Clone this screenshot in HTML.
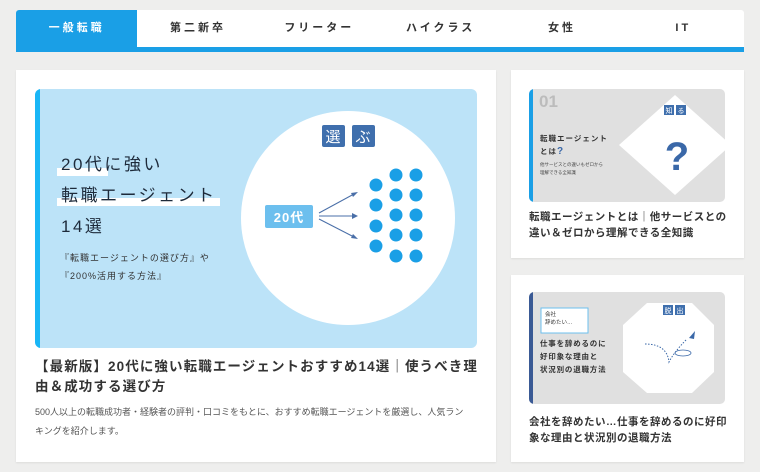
<!DOCTYPE html>
<html><head><meta charset="utf-8"><style>
*{margin:0;padding:0;box-sizing:border-box}
body{width:760px;height:472px;background:#eeeeed;font-family:"Liberation Sans","Noto Sans CJK JP",sans-serif;position:relative;overflow:hidden;color:#333}
.nav{position:absolute;left:16px;top:10px;width:728px;height:42px;background:#fff;border-bottom:5px solid #1a9fe6;display:flex;border-radius:3px 3px 0 0}
.nav div{flex:1;text-align:center;line-height:37px;font-size:11px;font-weight:bold;letter-spacing:3px;color:#333}
.nav .on{background:#1a9fe6;color:#fff;border-radius:3px 0 0 0}
.card{position:absolute;background:#fff;box-shadow:0 1px 2px rgba(0,0,0,.08)}
.abs{position:absolute}
.ttl{font-size:13.5px;font-weight:bold;letter-spacing:1.1px;line-height:20px;color:#333;white-space:nowrap}
.st{font-size:10.5px;font-weight:bold;letter-spacing:.5px;line-height:16px;color:#333;white-space:nowrap}
</style></head><body>
<div class="nav"><div class="on">一般転職</div><div>第二新卒</div><div>フリーター</div><div>ハイクラス</div><div>女性</div><div>IT</div></div>

<div class="card" style="left:16px;top:70px;width:480px;height:392px"></div>
<div class="abs" style="left:35px;top:89px;width:442px;height:259px;background:#bce3f8;border-radius:6px;overflow:hidden">
 <div class="abs" style="left:0;top:0;width:5px;height:259px;background:#19b6f6"></div>
 <div class="abs" style="left:22px;top:79px;width:51px;height:8px;background:#fff"></div>
 <div class="abs" style="left:22px;top:109px;width:163px;height:8px;background:#fff"></div>
 <div class="abs" style="left:26px;top:60px;font-size:17px;letter-spacing:2.5px;line-height:31px;color:#1d2a3a;white-space:nowrap">20代に強い<br>転職エージェント<br>14選</div>
 <div class="abs" style="left:25px;top:160px;font-size:9px;letter-spacing:1px;line-height:18px;color:#333;white-space:nowrap">『転職エージェントの選び方』や<br>『200%活用する方法』</div>
 <svg class="abs" style="left:0;top:0" width="442" height="259">
  <circle cx="313" cy="129" r="107" fill="#fff"/>
  <rect x="287" y="36" width="23" height="22" rx="2" fill="#3f6fad"/>
  <rect x="317" y="36" width="23" height="22" rx="2" fill="#3f6fad"/>
  <text x="298" y="53" font-size="15" fill="#fff" text-anchor="middle" font-family="Noto Sans CJK JP">選</text>
  <text x="328" y="53" font-size="15" fill="#fff" text-anchor="middle" font-family="Noto Sans CJK JP">ぶ</text>
  <rect x="230" y="116" width="48" height="23" rx="2" fill="#6cbfee"/>
  <text x="254" y="133" font-size="13" font-weight="bold" fill="#fff" text-anchor="middle" letter-spacing="1" font-family="Liberation Sans,Noto Sans CJK JP">20代</text>
  <g stroke="#4a6fa8" stroke-width="1" fill="#4a6fa8">
   <line x1="284" y1="124" x2="319" y2="105"/><line x1="284" y1="127" x2="319" y2="127"/><line x1="284" y1="130" x2="319" y2="148"/>
   <polygon points="323,103 316,104 318,108" stroke="none"/><polygon points="323,127 317,124 317,130" stroke="none"/><polygon points="323,150 316,149 318,145" stroke="none"/>
  </g>
  <g fill="#1a9fe6">
   <circle cx="341" cy="96" r="6.5"/><circle cx="341" cy="116" r="6.5"/><circle cx="341" cy="137" r="6.5"/><circle cx="341" cy="157" r="6.5"/>
   <circle cx="361" cy="86" r="6.5"/><circle cx="361" cy="106" r="6.5"/><circle cx="361" cy="126" r="6.5"/><circle cx="361" cy="146" r="6.5"/><circle cx="361" cy="167" r="6.5"/>
   <circle cx="381" cy="86" r="6.5"/><circle cx="381" cy="106" r="6.5"/><circle cx="381" cy="126" r="6.5"/><circle cx="381" cy="146" r="6.5"/><circle cx="381" cy="167" r="6.5"/>
  </g>
 </svg>
</div>
<div class="abs ttl" style="left:35px;top:357px">【最新版】20代に強い転職エージェントおすすめ14選｜使うべき理<br>由＆成功する選び方</div>
<div class="abs" style="left:35px;top:403px;font-size:9px;line-height:19px;color:#555;white-space:nowrap">500人以上の転職成功者・経験者の評判・口コミをもとに、おすすめ転職エージェントを厳選し、人気ラン<br>キングを紹介します。</div>

<div class="card" style="left:511px;top:70px;width:233px;height:188px"></div>
<div class="abs" style="left:529px;top:89px;width:196px;height:113px;background:#e0e0e0;border-radius:5px;overflow:hidden">
 <div class="abs" style="left:0;top:0;width:4px;height:113px;background:#1a9fe6"></div>
 <div class="abs" style="left:10px;top:3px;font-size:17px;color:#bcbcbc;font-weight:bold">01</div>
 <svg class="abs" style="left:0;top:0" width="196" height="113">
  <polygon points="146,6 202,56 146,106 90,56" fill="#fff"/>
  <rect x="135" y="16" width="10" height="10" fill="#3f6fad"/><rect x="147" y="16" width="10" height="10" fill="#3f6fad"/>
  <text x="140" y="24" font-size="7" fill="#fff" text-anchor="middle" font-family="Noto Sans CJK JP">知</text>
  <text x="152" y="24" font-size="7" fill="#fff" text-anchor="middle" font-family="Noto Sans CJK JP">る</text>
  <text x="148" y="81" font-size="40" font-weight="bold" fill="#3a68a8" text-anchor="middle" font-family="Liberation Sans">?</text>
 </svg>
 <div class="abs" style="left:11px;top:43px;font-size:7.5px;font-weight:bold;letter-spacing:1px;line-height:13px;color:#333;white-space:nowrap">転職エージェント<br>とは<span style="font-size:10px;color:#3a68a8">?</span></div>
 <div class="abs" style="left:11px;top:72px;font-size:4.5px;line-height:8px;color:#444;white-space:nowrap">他サービスとの違いもゼロから<br>理解できる全知識</div>
</div>
<div class="abs st" style="left:529px;top:209px">転職エージェントとは｜他サービスとの<br>違い＆ゼロから理解できる全知識</div>

<div class="card" style="left:511px;top:275px;width:233px;height:187px"></div>
<div class="abs" style="left:529px;top:292px;width:196px;height:112px;background:#e0e0e0;border-radius:5px;overflow:hidden">
 <div class="abs" style="left:0;top:0;width:4px;height:112px;background:#3a5a95"></div>
 <svg class="abs" style="left:0;top:0" width="196" height="112">
  <polygon points="118,11 163,11 185,33 185,80 163,101 118,101 94,80 94,33" fill="#fff"/>
  <rect x="134" y="13" width="10" height="10" fill="#3f6fad"/><rect x="146" y="13" width="10" height="10" fill="#3f6fad"/>
  <text x="139" y="21" font-size="7" fill="#fff" text-anchor="middle" font-family="Noto Sans CJK JP">脱</text>
  <text x="151" y="21" font-size="7" fill="#fff" text-anchor="middle" font-family="Noto Sans CJK JP">出</text>
  <path d="M116 52 Q138 52 140 70 Q145 60 158 47" stroke="#3a68a8" stroke-width="1" stroke-dasharray="1.5 1.5" fill="none"/>
  <ellipse cx="154" cy="61" rx="8" ry="3" stroke="#3a68a8" fill="none" stroke-width=".8"/>
  <polygon points="166,39 160,46 165,47" fill="#3a68a8"/>
  <rect x="12" y="16" width="47" height="25" fill="#fff" stroke="#6cbfee"/>
 </svg>
 <div class="abs" style="left:16px;top:19px;font-size:5.5px;line-height:8px;color:#333;white-space:nowrap">会社<br>辞めたい…</div>
 <div class="abs" style="left:11px;top:45px;font-size:7.5px;font-weight:bold;letter-spacing:.8px;line-height:13px;color:#333;white-space:nowrap">仕事を辞めるのに<br>好印象な理由と<br>状況別の退職方法</div>
</div>
<div class="abs st" style="left:529px;top:414px">会社を辞めたい…仕事を辞めるのに好印<br>象な理由と状況別の退職方法</div>
</body></html>
